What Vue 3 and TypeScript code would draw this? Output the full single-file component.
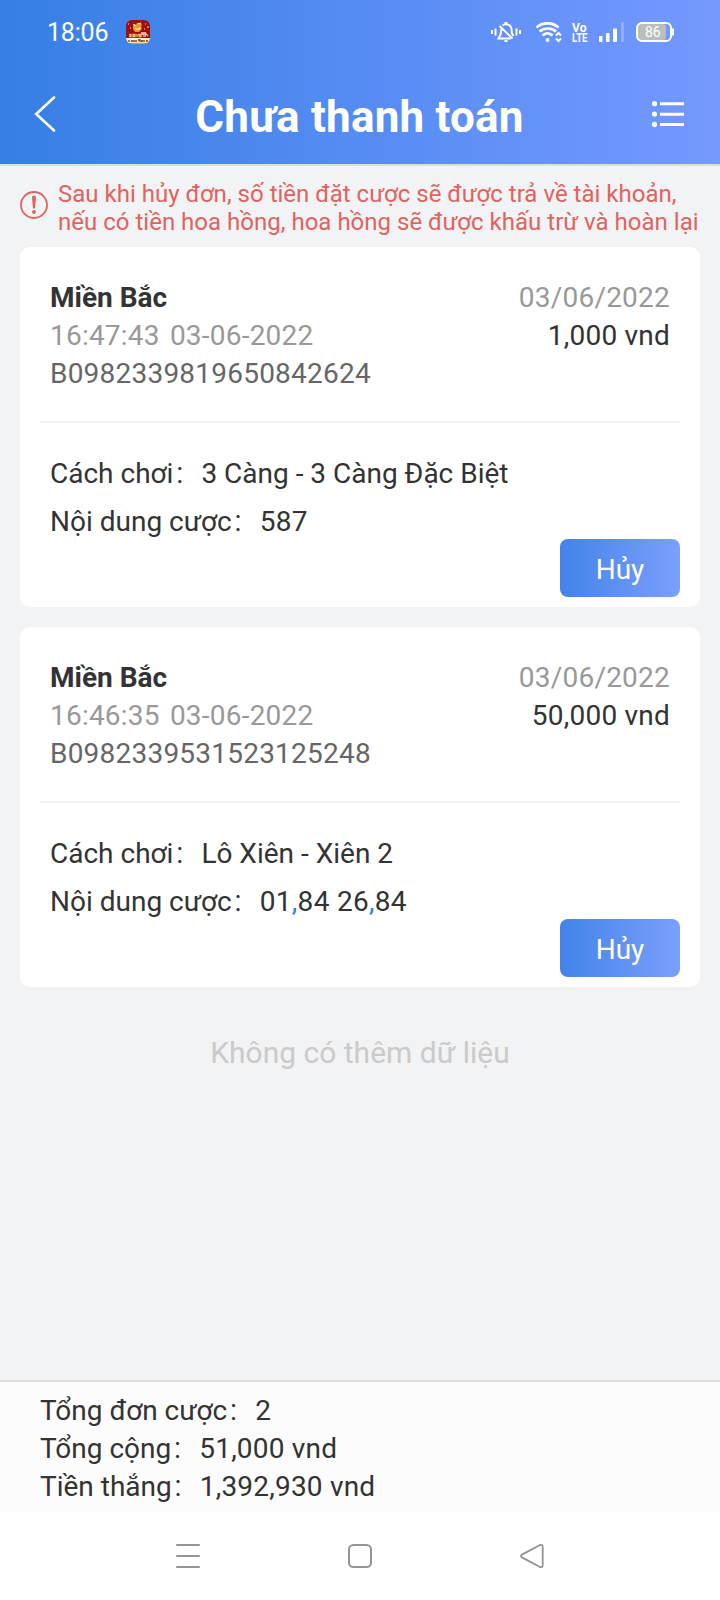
<script setup lang="ts">
interface Bet {
  region: string
  time: string
  day: string
  date: string
  amount: string
  code: string
  play: string
  content: string
}

const bets: Bet[] = [
  {
    region: 'Miền Bắc',
    time: '16:47:43',
    day: '03-06-2022',
    date: '03/06/2022',
    amount: '1,000 vnd',
    code: 'B0982339819650842624',
    play: '3 Càng - 3 Càng Đặc Biệt',
    content: '587',
  },
  {
    region: 'Miền Bắc',
    time: '16:46:35',
    day: '03-06-2022',
    date: '03/06/2022',
    amount: '50,000 vnd',
    code: 'B0982339531523125248',
    play: 'Lô Xiên - Xiên 2',
    content: '01,84 26,84',
  },
]

const totals = [
  { label: 'Tổng đơn cược', value: '2' },
  { label: 'Tổng cộng', value: '51,000 vnd' },
  { label: 'Tiền thắng', value: '1,392,930 vnd' },
]

// Splits so that the commas between numbers can be tinted
const parts = (text: string): string[] => text.split(/(,)/)
</script>

<template>
  <div class="screen">
    <header class="top">
      <div class="status">
        <span class="clock">18:06</span>
        <svg class="app-icon" width="24" height="24" viewBox="0 0 24 24">
          <defs>
            <clipPath id="appClip"><rect width="24" height="24" rx="6" /></clipPath>
          </defs>
          <g clip-path="url(#appClip)">
            <rect width="24" height="24" fill="#9c0f14" />
            <path d="M7 4l3 1 1-2h4l1 2-1 2 1 2-3 3h-4L7 9z" fill="#e8962e" />
            <path d="M8 4.500l2 1.500M12 4l3-1M9 8.500l3 1 3-2" stroke="#fff0b5" stroke-width="1.200" fill="none" />
            <path d="M2 4h1M4 8h1M19 4h1M21 7h2M18 9h1" stroke="#e7a23e" stroke-width="1.300" />
            <path d="M3 14.500h2v2H3M7 14.500h2v2H7zM11 14v3M13 14.500h2v2h-2zM17 16h3M20 14l2 2" stroke="#f4c65f" stroke-width="1.300" fill="none" />
            <path d="M15 12h5l1 3h-6z" fill="#f0a8a0" />
            <rect y="18" width="24" height="5" fill="#fff1cf" />
            <path d="M3 20v2M5 21h2M8 20v2M10 20v2M12 20h2v2M15 21h2M18 20v2M20 21h2" stroke="#7b2721" stroke-width="1.300" fill="none" />
            <rect y="22.800" width="24" height="1.200" fill="#e6a02d" />
          </g>
        </svg>
        <svg class="status-icons" width="190" height="24" viewBox="488 20 190 24" fill="none" stroke="#fff" stroke-width="2">
          <path d="M492 30v4M495.500 28.500v7M516.500 28.500v7M520 30v4" />
          <path d="M499.500 26l13 12.500M501.500 29c-.5 1.500-.5 3.500-.8 5l-2.200 4.500h12M502.500 25.500c3.500-2.500 8.500-1 9 3.500l.3 4 1.700 3" stroke-width="2" />
          <path d="M504.500 23h3M504.500 41h3" stroke-width="2" />
          <path d="M536.500 27.500c6-5.500 16-5.500 22 0M539.500 31.500c5-4 12-4 16.500 0M542.500 35.500c3-3 7-3 10 0" stroke-width="2.600" />
          <circle cx="547.500" cy="40" r="2" fill="#fff" stroke="none" />
          <path d="M556 35.500l2.500-2.500 2.500 2.500M556 38.500l2.500 2.500 2.500-2.500" stroke-width="2" />
          <g fill="#fff" stroke="none" font-family="Roboto, sans-serif" font-weight="700">
            <text x="572" y="31.500" font-size="12.500" textLength="14.500" lengthAdjust="spacingAndGlyphs">Vo</text>
            <text x="572" y="42" font-size="12.500" textLength="15.500" lengthAdjust="spacingAndGlyphs">LTE</text>
          </g>
          <g fill="#fff" stroke="none">
            <rect x="599" y="36" width="3.500" height="6" rx=".8" />
            <rect x="606" y="33" width="3.500" height="9" rx=".8" />
            <rect x="613" y="28.500" width="4" height="13.500" rx=".8" />
            <rect x="621" y="22" width="3" height="20" rx=".8" opacity=".25" />
          </g>
          <rect x="637.500" y="24" width="28.500" height="16" rx="3" fill="#b9bfbc" stroke="none" />
          <rect x="637" y="23" width="34" height="18" rx="5" />
          <path d="M673 28.500v7" />
          <text x="645" y="37" font-size="14" fill="#fff" stroke="none" font-family="Roboto, sans-serif">86</text>
        </svg>
      </div>
      <div class="bar">
        <svg width="22" height="36" viewBox="0 0 22 36" fill="none" stroke="#fff" stroke-width="2.600">
          <path d="M20 1.500L2.200 18 20 34.500" stroke-linecap="round" />
        </svg>
        <h1>Chưa thanh toán</h1>
        <svg width="32" height="26" viewBox="0 0 32 26" fill="#fff">
          <circle cx="2.500" cy="2.700" r="2.600" /><circle cx="2.500" cy="13" r="2.600" /><circle cx="2.500" cy="23.400" r="2.600" />
          <path d="M8 1.200h24v3H8zM8 11.700h24v3H8zM8 22h24v3H8z" />
        </svg>
      </div>
    </header>

    <main>
      <div class="notice">
        <svg width="28" height="28" viewBox="0 0 28 28">
          <circle cx="14" cy="14" r="13" fill="none" stroke="#e0635d" stroke-width="1.800" />
          <path d="M12 6.200q0-1.700 2-1.700t2 1.700l-1 11.300h-2z" fill="#e0635d" />
          <circle cx="14" cy="21" r="1.900" fill="#e0635d" />
        </svg>
        <p>Sau khi hủy đơn, số tiền đặt cược sẽ được trả về tài khoản,<br />nếu có tiền hoa hồng, hoa hồng sẽ được khấu trừ và hoàn lại</p>
      </div>

      <section v-for="bet in bets" :key="bet.code" class="card">
        <div class="summary">
          <div>
            <div class="region">{{ bet.region }}</div>
            <div class="muted time">{{ bet.time }} {{ bet.day }}</div>
            <div class="code">{{ bet.code }}</div>
          </div>
          <div class="right">
            <div class="muted">{{ bet.date }}</div>
            <div>{{ bet.amount }}</div>
          </div>
        </div>
        <div class="details">
          <div>Cách chơi<b>：</b><span>{{ bet.play }}</span></div>
          <div>Nội dung cược<b>：</b><span class="digits"><template v-for="(part, i) in parts(bet.content)" :key="i"><i v-if="part === ','">,</i><template v-else>{{ part }}</template></template></span></div>
        </div>
        <button type="button">Hủy</button>
      </section>

      <p class="empty">Không có thêm dữ liệu</p>
    </main>

    <footer>
      <div v-for="total in totals" :key="total.label">{{ total.label }}<b>：</b><span>{{ total.value }}</span></div>
    </footer>

    <nav>
      <svg width="24" height="26" viewBox="0 0 24 26" stroke="#949494" stroke-width="2" stroke-linecap="round">
        <path d="M1 2h22M1 13h22M1 24h22" />
      </svg>
      <svg width="24" height="26" viewBox="0 0 24 26" fill="none" stroke="#949494" stroke-width="2">
        <rect x="1" y="2" width="22" height="22" rx="4.500" />
      </svg>
      <svg width="24" height="26" viewBox="0 0 24 26" fill="none" stroke="#949494" stroke-width="1.800" stroke-linejoin="round">
        <path d="M2 11.600L19.500 2.200q3.200-1.200 3.200 1.800v18q0 3-3.200 1.800L2 14.400q-2-1.400 0-2.800z" />
      </svg>
    </nav>
  </div>
</template>

<style>
body {
  margin: 0;
}
</style>

<style scoped>
.screen {
  display: flex;
  flex-direction: column;
  width: 720px;
  height: 1600px;
  background: #f2f3f5;
  color: #333;
  font: 28px/38px Roboto, "Noto Sans CJK SC", sans-serif;
}
.top {
  box-sizing: border-box;
  height: 166px;
  border-bottom: 2px solid #dcdde0;
  background: linear-gradient(90deg, #367fe5, #7599ff) padding-box;
  color: #fff;
}
.status {
  display: flex;
  align-items: center;
  height: 64px;
  padding: 0 42px 0 47px;
}
.clock {
  width: 79px;
  padding-top: 2px;
  font-size: 25px;
  letter-spacing: -0.2px;
}
.status-icons {
  margin-left: auto;
}
.bar {
  display: flex;
  align-items: center;
  justify-content: space-between;
  height: 100px;
  padding: 0 36px 0 34px;
}
.bar svg {
  margin-bottom: 1px;
}
h1 {
  margin: 6px 0 0 11px;
  font-size: 44px;
  line-height: 52px;
  font-weight: 700;
  letter-spacing: 0.2px;
}
main {
  flex: 1;
}
.notice {
  display: flex;
  gap: 10px;
  height: 67px;
  padding: 14px 0 0 20px;
  color: #e0635d;
  font-size: 24px;
  line-height: 28px;
  letter-spacing: 0.01px;
  white-space: nowrap;
}
.notice svg {
  flex: none;
  margin-top: 11px;
}
.notice p {
  margin: 0;
}
.card {
  display: flex;
  flex-direction: column;
  box-sizing: border-box;
  height: 360px;
  margin: 0 20px 20px;
  padding: 0 20px;
  border-radius: 10px;
  background: #fff;
}
.summary {
  display: flex;
  justify-content: space-between;
  box-sizing: border-box;
  height: 176px;
  padding: 32px 10px 0;
  border-bottom: 2px solid #f2f3f5;
}
.right {
  letter-spacing: 0.22px;
  text-align: right;
}
.region {
  font-weight: 700;
}
.muted {
  color: #999;
}
.time {
  letter-spacing: 0.22px;
  word-spacing: 3px;
}
.code {
  color: #666;
  letter-spacing: 0.22px;
}
.details {
  height: 116px;
  box-sizing: border-box;
  padding: 27px 10px 0;
  line-height: 48px;
}
.digits {
  letter-spacing: 0.3px;
}
b {
  display: inline-block;
  width: 28px;
  font-size: 25px;
  font-weight: 300;
  line-height: 1;
}
i {
  color: #3c80e4;
  font-style: normal;
}
button {
  align-self: flex-end;
  width: 120px;
  height: 58px;
  padding: 4px 0 0;
  border: 0;
  border-radius: 8px;
  background: linear-gradient(90deg, #4284e8, #7b9ffc);
  color: #fff;
  font: inherit;
}
.empty {
  margin: 46px 0 0;
  color: #cacaca;
  font-size: 30px;
  line-height: 40px;
  text-align: center;
}
footer {
  box-sizing: border-box;
  height: 132px;
  padding: 10px 40px 0;
  border-top: 2px solid #dcdddf;
  background: #fcfcfc;
}
footer span {
  letter-spacing: 0.2px;
}
nav {
  display: flex;
  align-items: center;
  justify-content: space-between;
  height: 88px;
  padding: 0 176px;
  background: #fff;
}
</style>
